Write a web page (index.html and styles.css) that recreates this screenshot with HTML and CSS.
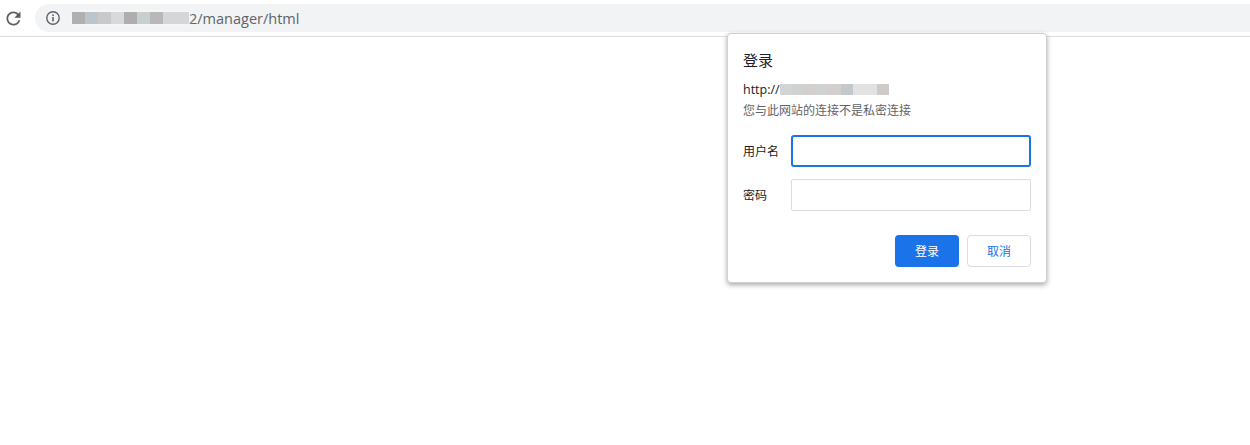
FILE: index.html
```html
<!DOCTYPE html>
<html lang="zh">
<head>
<meta charset="utf-8">
<title>登录</title>
<link rel="stylesheet" href="styles.css">
</head>
<body>
<header class="toolbar">
  <svg class="reload" width="21" height="21" viewBox="0 0 24 24"><path d="M17.65 6.35A7.958 7.958 0 0 0 12 4c-4.42 0-7.99 3.58-7.99 8s3.57 8 7.99 8c3.73 0 6.84-2.55 7.73-6h-2.08A5.99 5.99 0 0 1 12 18c-3.31 0-6-2.69-6-6s2.69-6 6-6c1.66 0 3.14.69 4.22 1.78L13 11h7V4l-2.35 2.35z" fill="#5a5e62"/></svg>
  <div class="omnibox">
    <svg class="info" width="16" height="16" viewBox="0 0 16 16"><circle cx="8" cy="8" r="6.2" fill="none" stroke="#5f6368" stroke-width="1.4"/><rect x="7.2" y="7" width="1.6" height="4.4" fill="#5f6368"/><rect x="7.2" y="4.4" width="1.6" height="1.6" fill="#5f6368"/></svg>
    <div class="mosaic url-mosaic">
      <i class="m1"></i><i class="m2"></i><i class="m3"></i><i class="m4"></i><i class="m5"></i><i class="m6"></i><i class="m7"></i><i class="m8"></i><i class="m8"></i>
    </div>
    <span class="url">2/manager/html</span>
  </div>
</header>
<main class="page">
  <section class="dialog">
    <h1 class="title">登录</h1>
    <div class="origin"><span>http://</span>
      <div class="mosaic origin-mosaic"><i class="n1"></i><i class="n2"></i><i class="n3"></i><i class="n2"></i><i class="n3"></i><i class="n4"></i><i class="n5"></i><i class="n5"></i><i class="n6"></i></div>
    </div>
    <p class="note">您与此网站的连接不是私密连接</p>
    <form class="fields">
      <label class="row"><span class="label">用户名</span><input class="input focused" type="text"></label>
      <label class="row"><span class="label">密码</span><input class="input" type="password"></label>
      <div class="actions">
        <button class="btn primary" type="button">登录</button>
        <button class="btn secondary" type="button">取消</button>
      </div>
    </form>
  </section>
</main>
</body>
</html>
```
FILE: styles.css
```css
* { box-sizing: border-box; }
html, body { margin: 0; height: 100%; background: #fff; overflow: hidden; }
body { font-family: "Open Sans", "Noto Sans CJK SC", sans-serif; color: #202124; }
.toolbar { height: 37px; display: flex; align-items: center; padding-left: 3px; border-bottom: 1px solid #dadce0; background: #fff; }
.reload { flex: none; }
.omnibox { flex: 1; height: 28px; margin-left: 11px; border-radius: 14px 0 0 14px; background: #f1f3f4; display: flex; align-items: center; padding-left: 10px; }
.info { flex: none; }
.mosaic { display: flex; flex: none; filter: blur(.5px); }
.mosaic i { display: block; height: 100%; }
.url-mosaic { height: 12px; margin-left: 11px; box-shadow: 0 0 5px #f8f9fa; }
.url-mosaic i { width: 13px; }
.m1 { background: #b1b0b0; }
.m2 { background: #bcc4cc; }
.m3 { background: #c8c9c9; }
.m4 { background: #d7d9da; }
.m5 { background: #aeaeae; }
.m6 { background: #c8d0cf; }
.m7 { background: #b8b8b8; }
.m8 { background: #d3d7d9; }
.url { font-size: 14.5px; color: #5f6368; }
.page { position: relative; }
.dialog { position: absolute; left: 727px; top: -4px; width: 320px; height: 250px; padding: 17px 15px 15px; background: #fff; border-radius: 4px; border: 1px solid #d0d0d0; box-shadow: 0 2px 5px rgba(60,64,67,.45); }
.title { margin: 0; font-size: 15px; font-weight: 400; line-height: 18px; color: #202124; }
.origin { display: flex; align-items: center; margin-top: 13px; font-size: 12.5px; line-height: 16px; }
.origin-mosaic { height: 11px; margin-top: -1px; }
.origin-mosaic i { width: 12.2px; }
.n1 { background: #d3d4d5; }
.n2 { background: #d0d1d1; }
.n3 { background: #d3cfcc; }
.n4 { background: #c3c8ca; }
.n5 { background: #e2e2e2; }
.n6 { background: #cfcbc9; }
.note { margin: 5px 0 0; font-size: 12px; line-height: 16px; color: #5f6368; }
.fields { display: flex; flex-direction: column; margin-top: 16px; }
.row { display: flex; align-items: center; height: 32px; margin-bottom: 12px; font-size: 12px; color: #202124; }
.label { width: 48px; flex: none; }
.input { width: 240px; height: 32px; border: 1px solid #dadce0; border-radius: 2px; background: #fff; outline: none; padding: 0 6px; }
.focused { border: 2px solid #1a73e8; border-radius: 3px; }
.actions { display: flex; justify-content: flex-end; gap: 8px; margin-top: 12px; }
.btn { width: 64px; height: 32px; border-radius: 4px; font: 12px "Open Sans", "Noto Sans CJK SC", sans-serif; padding: 0; }
.primary { background: #1a73e8; border: 0; color: #fff; }
.secondary { background: #fff; border: 1px solid #dadce0; color: #1a73e8; }
```
